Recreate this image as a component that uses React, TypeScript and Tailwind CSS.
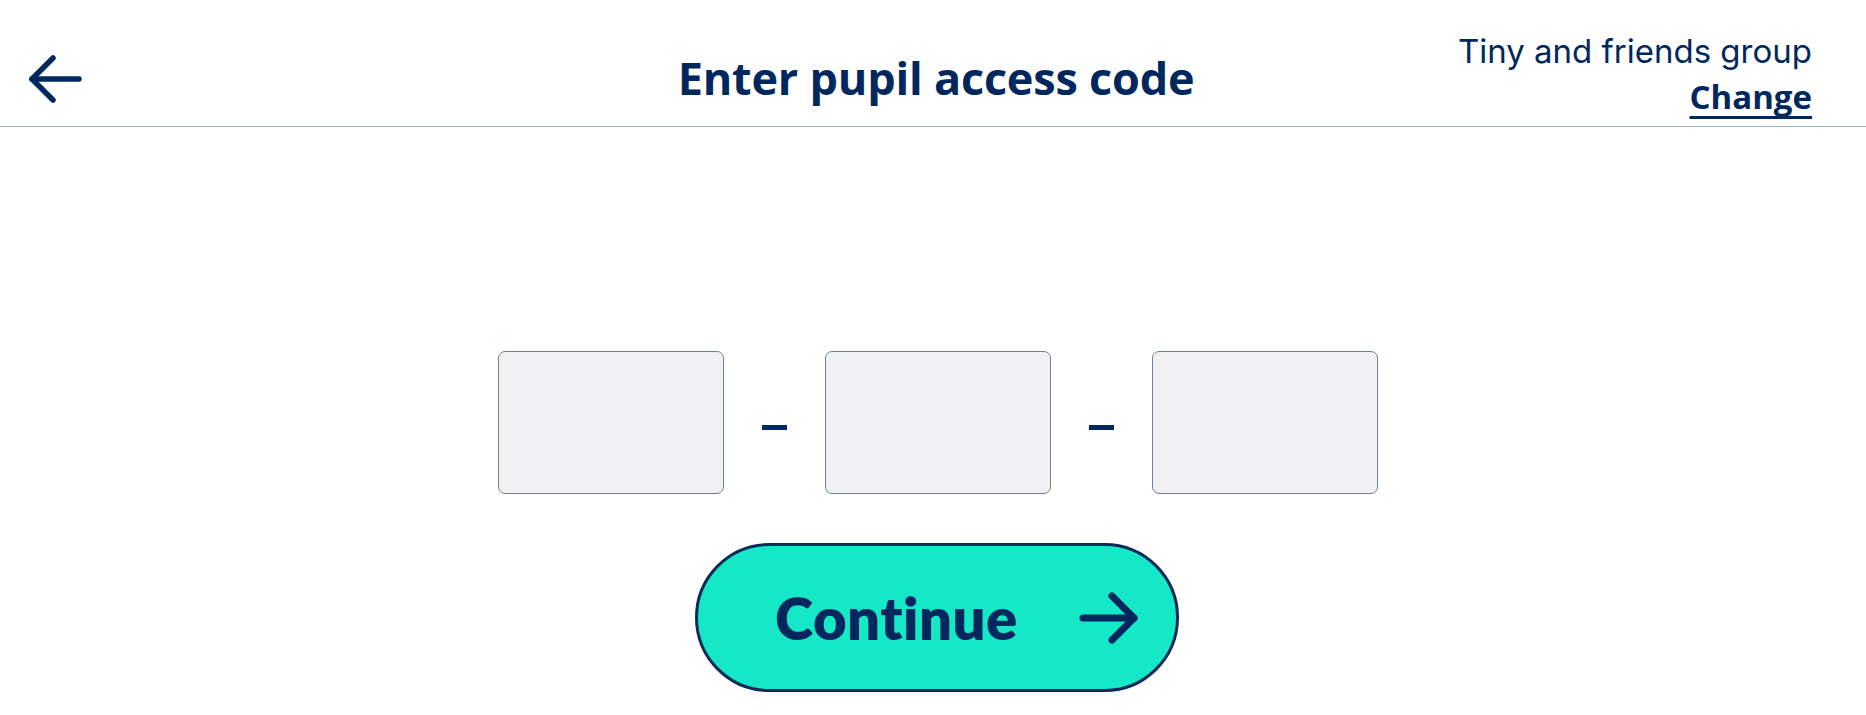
import React from 'react';

const navy = 'text-[#00285e]';

const BackArrow: React.FC = () => (
  <svg width="56" height="52" viewBox="0 0 56 52" fill="none" stroke="#00285e" strokeWidth="5.5" strokeLinecap="round" strokeLinejoin="round">
    <path d="M52 26H5" />
    <path d="M26 5L5 26L26 47" />
  </svg>
);

const CodeBox: React.FC = () => (
  <input
    type="text"
    aria-label="code part"
    className="w-[226px] h-[143px] rounded-[7px] border border-[#6f8299] bg-[#eff1f3] outline-none"
  />
);

const Dash: React.FC = () => (
  <div className="w-[25px] h-[5px] bg-[#00285e] mt-[9px]" />
);

export default function App() {
  return (
    <div className="min-h-screen bg-white" style={{ fontFamily: '"Open Sans", "Noto Sans", sans-serif' }}>
      {/* Header */}
      <header className="grid grid-cols-[1fr_auto_1fr] items-center h-[127px] pt-[22px] border-b border-[#a0acba]">
        <div className="pl-[27px] pt-[10px]">
          <button aria-label="Back" className="block">
            <BackArrow />
          </button>
        </div>
        <h1 className={`text-[45px] font-bold ${navy} leading-none tracking-[-0.2px] pt-[6px] pl-[6px]`}>
          Enter pupil access code
        </h1>
        <div className="flex flex-col items-end pr-[54px]">
          <span className={`text-[33px] leading-[46px] ${navy}`} style={{ fontFamily: 'Inter, sans-serif', fontWeight: 400 }}>
            Tiny and friends group
          </span>
          <a
            href="#"
            className={`text-[33px] leading-[46px] font-bold underline underline-offset-[7px] decoration-[3px] [text-decoration-skip-ink:none] ${navy}`}
          >
            Change
          </a>
        </div>
      </header>

      {/* Code entry */}
      <main className="flex flex-col items-center pt-[224px]">
        <div className="flex items-center gap-[38px] ml-[9px]">
          <CodeBox />
          <Dash />
          <CodeBox />
          <Dash />
          <CodeBox />
        </div>

        <button className="mt-[49px] ml-[8px] w-[484px] h-[149px] rounded-full border-[3px] border-[#0b2a5a] bg-[#15e8c6] flex items-center justify-between pl-[77px] pr-[37px]">
          <span className={`text-[58px] font-bold ${navy} leading-none tracking-[0.5px]`} style={{ fontFamily: 'Lato, sans-serif', fontWeight: 800 }}>
            Continue
          </span>
          <svg width="60" height="52" viewBox="0 0 60 52" fill="none" stroke="#00285e" strokeWidth="7" strokeLinecap="round" strokeLinejoin="round">
            <path d="M4 26H55" />
            <path d="M33 4L55 26L33 48" />
          </svg>
        </button>
      </main>
    </div>
  );
}
